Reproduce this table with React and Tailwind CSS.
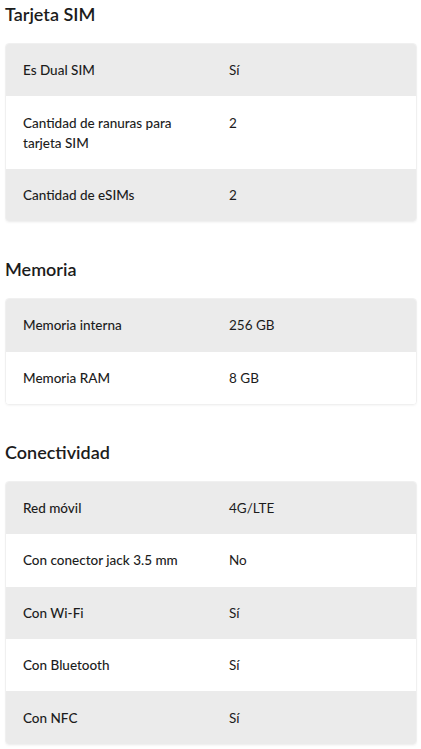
import React from "react";

const sections = [
  {
    title: "Tarjeta SIM",
    rows: [
      ["Es Dual SIM", "Sí"],
      ["Cantidad de ranuras para tarjeta SIM", "2"],
      ["Cantidad de eSIMs", "2"],
    ],
  },
  {
    title: "Memoria",
    rows: [
      ["Memoria interna", "256 GB"],
      ["Memoria RAM", "8 GB"],
    ],
  },
  {
    title: "Conectividad",
    rows: [
      ["Red móvil", "4G/LTE"],
      ["Con conector jack 3.5 mm", "No"],
      ["Con Wi-Fi", "Sí"],
      ["Con Bluetooth", "Sí"],
      ["Con NFC", "Sí"],
    ],
  },
];

export default function App() {
  return (
    <div className="bg-white min-h-screen px-[5px] pt-[2px] pr-[4px] font-['Lato',sans-serif] text-[#1c1c1c]">
      {sections.map((s) => (
        <section key={s.title} className="mb-[35px]">
          <h2 className="text-[18px] leading-[24px] font-semibold mb-[17px]">{s.title}</h2>
          <div className="rounded-[4px] border border-[#f0f0f0] shadow-[0_1px_2px_rgba(0,0,0,0.04)] overflow-hidden">
            {s.rows.map(([label, value], i) => (
              <div
                key={label}
                className={`flex py-[16.2px] text-[13.5px] leading-[20px] ${
                  i % 2 === 0 ? "bg-[#ebebeb]" : "bg-white"
                }`}
              >
                <div className="w-[223px] pl-[17px] pr-[44px] font-medium">{label}</div>
                <div className="flex-1">{value}</div>
              </div>
            ))}
          </div>
        </section>
      ))}
    </div>
  );
}
